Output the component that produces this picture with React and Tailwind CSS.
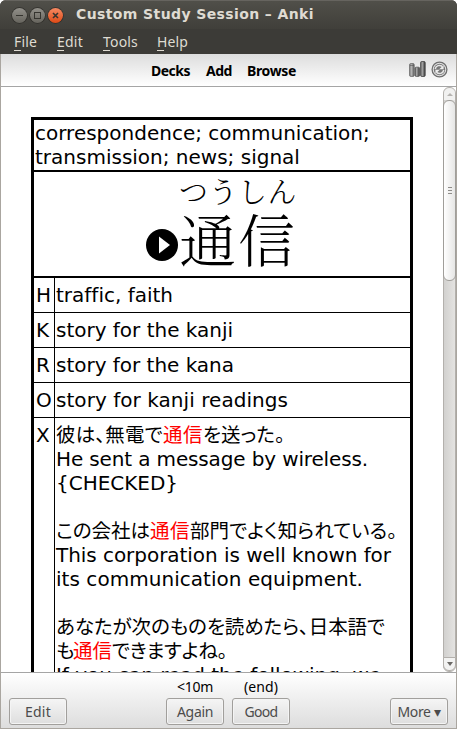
import { useLayoutEffect, useRef, useState } from "react";

// Spreads the letters of a run of text so that it takes exactly `w` pixels.
function Fit({ w, className = "", children }) {
  const ref = useRef(null);
  const [gap, setGap] = useState(0);
  useLayoutEffect(() => {
    const el = ref.current;
    const natural = el.getBoundingClientRect().width;
    setGap((w - natural) / el.textContent.length);
  }, [w]);
  return (
    <span ref={ref} className={"inline-block whitespace-pre " + className} style={{ letterSpacing: gap + "px" }}>
      {children}
    </span>
  );
}

const UI = "font-['Noto_Sans','Open_Sans',sans-serif]";

function WindowButton({ kind }) {
  const close = kind === "close";
  return (
    <svg width="18" height="18" viewBox="0 0 18 18">
      <defs>
        <linearGradient id={"wb-" + kind} x1="0" y1="0" x2="0" y2="1">
          <stop offset="0" stopColor={close ? "#f58a63" : "#92908a"} />
          <stop offset="1" stopColor={close ? "#df4a16" : "#66645d"} />
        </linearGradient>
      </defs>
      <circle cx="9.5" cy="8.5" r="8.2" fill="#2f2e2a" />
      <circle cx="9.5" cy="8.5" r="7.5" fill={`url(#wb-${kind})`} />
      <g stroke="#35342f" strokeWidth="1" fill="none">
        {kind === "min" && <path d="M6 8.5h7" />}
        {kind === "max" && <rect x="6.5" y="5.5" width="6" height="6" />}
        {close && <path d="M7 6l5 5M12 6l-5 5" strokeWidth="1.6" />}
      </g>
    </svg>
  );
}

function MenuItem({ label, w, className }) {
  return (
    <div className={"relative h-[26px] leading-[26px] " + className}>
      <Fit w={w}>{label}</Fit>
      <i className="absolute left-0 top-[21px] h-px w-[7px] bg-[#dfdbd2]" />
    </div>
  );
}

function StatsIcon() {
  return (
    <svg width="17" height="16" viewBox="0 0 17 16">
      <defs>
        <linearGradient id="bar"><stop offset="0" stopColor="#777" /><stop offset=".35" stopColor="#bbb" /><stop offset="1" stopColor="#606060" /></linearGradient>
        <linearGradient id="bar2"><stop offset="0" stopColor="#555" /><stop offset=".35" stopColor="#aaa" /><stop offset="1" stopColor="#333" /></linearGradient>
      </defs>
      <rect x=".6" y="2.6" width="4.6" height="12.8" rx="1.2" fill="url(#bar)" stroke="#666" strokeWidth=".8" />
      <path d="M1 4.5h4" stroke="#555" strokeWidth=".6" />
      <rect x="6" y="6.2" width="4.6" height="9.2" rx="1.2" fill="url(#bar2)" stroke="#555" strokeWidth=".8" />
      <rect x="11.6" y=".5" width="4.6" height="15" rx="1.2" fill="url(#bar2)" stroke="#444" strokeWidth=".8" />
    </svg>
  );
}

function SyncIcon() {
  return (
    <svg width="17" height="17" viewBox="0 0 17 17" fill="none">
      <circle cx="8.5" cy="8.5" r="7.4" fill="#e2e2e2" stroke="#6f6f6f" strokeWidth="1.3" />
      <circle cx="8.5" cy="8.5" r="5.7" fill="#777" />
      <path d="M4.2 8a4.3 4.3 0 0 1 7.2-2.4M12.8 9a4.3 4.3 0 0 1-7.2 2.4" stroke="#e6e6e6" strokeWidth="1.5" />
      <path d="M12.6 4.2v4H8.2zM4.4 12.8v-4h4.4z" fill="#eee" />
    </svg>
  );
}

function Row({ k, w, children }) {
  return (
    <div className="flex h-[35px] border-b border-black leading-[34px]">
      <div className="w-[21px] border-r border-black pl-[2px]">{k}</div>
      <div className="pl-px whitespace-nowrap">
        <Fit w={w}>{children}</Fit>
      </div>
    </div>
  );
}

function Line({ children }) {
  return <div className="h-6 whitespace-nowrap leading-6">{children}</div>;
}

const JP = "h-6 align-top leading-[22px] text-[19.5px] font-['Noto_Sans_CJK_JP',sans-serif] [font-feature-settings:'palt']";
const RED = JP + " text-[#ff0000]";

function Button({ label, w, className = "" }) {
  return (
    <div className={"flex h-[27px] w-[58px] items-center justify-center rounded-[3px] border border-[#a19f9c] bg-gradient-to-b from-[#f5f5f5] to-[#dedede] text-[14px] leading-[18px] text-[#4c4c4c] shadow-[inset_0_0_0_1px_#f4f4f4] " + className}>
      <Fit w={w}>{label}</Fit>
    </div>
  );
}

export default function App() {
  return (
    <div className="h-[729px] w-[457px] overflow-hidden bg-white">
      <div className="flex h-[729px] w-[457px] flex-col overflow-hidden rounded-t-[6px] bg-[#3c3b37]">
        <div className="flex h-[29px] shrink-0 items-center border-t border-[#66645f] bg-gradient-to-b from-[#504f49] to-[#403f3a] pl-[10px]">
          <div className="flex pt-[2px]">
            <WindowButton kind="min" />
            <WindowButton kind="max" />
            <WindowButton kind="close" />
          </div>
          <div className="ml-[12px] font-['DejaVu_Sans',sans-serif] text-[14px] font-bold leading-[26px] text-[#dfdbd2]">
            <Fit w={238} className="-translate-y-px">Custom Study Session – Anki</Fit>
          </div>
        </div>
        <div className={"flex h-[25px] shrink-0 bg-[#3c3b37] pl-[14px] text-[14px] text-[#dfdbd2] " + UI}>
          <MenuItem label="File" w={23} className="w-[43px]" />
          <MenuItem label="Edit" w={26} className="w-[46px]" />
          <MenuItem label="Tools" w={35} className="w-[54px]" />
          <MenuItem label="Help" w={31} className="" />
        </div>

        <div className="flex min-h-0 flex-1 flex-col border-x border-b border-[#aaa6a0] bg-white">
          <div className={"flex h-[33px] shrink-0 border-b border-[#a5a5a5] bg-gradient-to-b from-[#dddddd] to-[#ffffff] pl-[150px] text-[14px] font-bold leading-[34px] text-black " + UI}>
            <Fit w={39} className="mr-[16px]">Decks</Fit>
            <Fit w={26} className="mr-[15px]">Add</Fit>
            <Fit w={49}>Browse</Fit>
            <div className="ml-auto flex gap-[5px] pr-[8px] pt-[7px]">
              <StatsIcon />
              <SyncIcon />
            </div>
          </div>

          <div className="flex h-[585px] shrink-0 overflow-hidden">
            <div className="w-[442px] pl-[30px] pt-[30px] font-['DejaVu_Sans',sans-serif] text-[20px] text-black [font-variant-ligatures:none]">
              <div className="h-[700px] w-[382px] border-[3px] border-black">
                <div className="h-[52px] border-b-2 border-black pl-px pt-px">
                  <Line>correspondence; communication;</Line>
                  <Line>transmission; news; signal</Line>
                </div>
                <div className="flex h-[106px] border-b-2 border-black pl-[112px]">
                  <svg className="mt-[57px]" width="32" height="32" viewBox="0 0 32 32">
                    <circle cx="16" cy="16" r="16" />
                    <path d="M13 7.5v17L24 16z" fill="#fff" />
                  </svg>
                  <div className="font-['Noto_Serif_CJK_JP','Noto_Sans_CJK_JP',serif] font-light">
                    <div className="flex h-[38px] pl-px text-[29px] leading-[38px]">
                      <Fit w={118}>つうしん</Fit>
                    </div>
                    <div className="flex h-[60px] pl-px text-[57px] leading-[54px]">
                      <Fit w={118}>通信</Fit>
                    </div>
                  </div>
                </div>
                <Row k="H" w={117}>traffic, faith</Row>
                <Row k="K" w={177}>story for the kanji</Row>
                <Row k="R" w={178}>story for the kana</Row>
                <Row k="O" w={232}>story for kanji readings</Row>
                <div className="flex h-[400px]">
                  <div className="w-[21px] border-r border-black pl-[2px] pt-[5px] leading-6">X</div>
                  <div className="pl-px pt-[5px]">
                    <Line>
                      <Fit w={107} className={JP}>彼は、無電で</Fit>
                      <Fit w={40} className={RED}>通信</Fit>
                      <Fit w={82} className={JP}>を送った。</Fit>
                    </Line>
                    <Line><Fit w={312}>He sent a message by wireless.</Fit></Line>
                    <Line><Fit w={122}>{"{CHECKED}"}</Fit></Line>
                    <Line />
                    <Line>
                      <Fit w={94} className={JP}>この会社は</Fit>
                      <Fit w={40} className={RED}>通信</Fit>
                      <Fit w={207} className={JP}>部門でよく知られている。</Fit>
                    </Line>
                    <Line><Fit w={335}>This corporation is well known for</Fit></Line>
                    <Line><Fit w={307}>its communication equipment.</Fit></Line>
                    <Line />
                    <Line>
                      <Fit w={329} className={JP}>あなたが次のものを読めたら、日本語で</Fit>
                    </Line>
                    <Line>
                      <Fit w={17} className={JP}>も</Fit>
                      <Fit w={39} className={RED}>通信</Fit>
                      <Fit w={115} className={JP}>できますよね。</Fit>
                    </Line>
                    <Line><Fit w={325}>If you can read the following, we</Fit></Line>
                  </div>
                </div>
              </div>
            </div>
            <div className="flex w-[13px] flex-col rounded-[6px] border border-[#b3b0ac] bg-gradient-to-r from-[#d2d1cf] to-[#e4e3e1]">
              <div className="flex h-[12px] shrink-0 items-center justify-center rounded-t-[6px] bg-[#f1f1f0]">
                <i className="border-x-[3px] border-b-[3px] border-x-transparent border-b-[#b5b3b0]" />
              </div>
              <div className="-mx-px flex h-[181px] flex-col items-center justify-center gap-[2px] rounded-[6px] border border-[#a09e9a] bg-gradient-to-r from-[#ffffff] to-[#e6e6e5]">
                <i className="h-px w-[4px] bg-[#8e8c89]" />
                <i className="h-px w-[4px] bg-[#8e8c89]" />
                <i className="h-px w-[4px] bg-[#8e8c89]" />
              </div>
              <div className="-mx-px mt-auto flex h-[14px] shrink-0 items-center justify-center rounded-b-[6px] border border-[#b3b0ac] bg-[#f3f3f2]">
                <i className="border-x-[3px] border-t-[4px] border-x-transparent border-t-[#6b6966]" />
              </div>
            </div>
          </div>

          <div className={"h-[56px] shrink-0 border-t border-[#a5a5a5] bg-gradient-to-b from-[#ffffff] to-[#dddddd] text-[14px] text-black " + UI}>
            <div className="flex h-[25px] pl-[176px] pt-[4px] leading-[20px]">
              <Fit w={36} className="mr-[31px]">{"<10m"}</Fit>
              <Fit w={34}>(end)</Fit>
            </div>
            <div className="flex pl-[8px]">
              <Button label="Edit" w={26} />
              <Button label="Again" w={36} className="ml-[99px]" />
              <Button label="Good" w={33} className="ml-[8px]" />
              <Button label="More ▾" w={43} className="ml-[100px]" />
            </div>
          </div>
        </div>
      </div>
    </div>
  );
}
